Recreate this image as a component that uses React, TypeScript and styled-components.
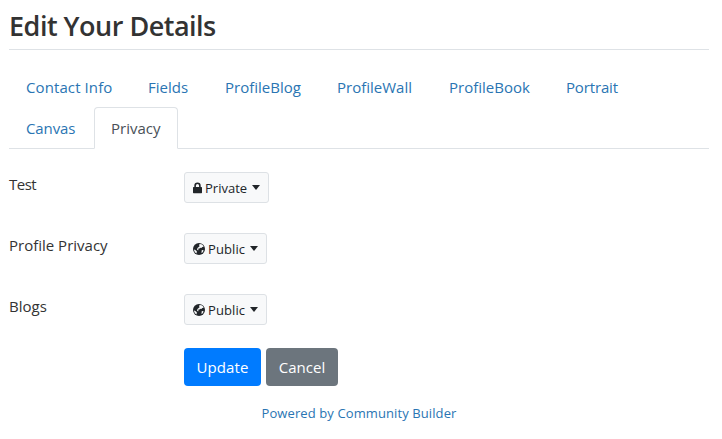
import React from "react";
import styled, { createGlobalStyle } from "styled-components";

const GlobalStyle = createGlobalStyle`
  *, *::before, *::after { box-sizing: border-box; }
  body {
    margin: 0;
    background: #fff;
    color: #333;
    font-family: "Open Sans", "Noto Sans", sans-serif;
    font-size: 15px;
    line-height: 24px;
  }
`;

const Page = styled.main`
  width: 722px;
  height: 439px;
  padding: 9px 13px 0 9px;
  overflow: hidden;
`;

const Title = styled.h1`
  margin: 0 0 16px;
  height: 41px;
  border-bottom: 1px solid #dee2e6;
  font-size: 27px;
  font-weight: 600;
  line-height: 34px;
  letter-spacing: -0.5px;
  color: #333;
`;

const TabList = styled.ul`
  display: flex;
  flex-wrap: wrap;
  margin: 0 0 23px;
  padding: 0;
  list-style: none;
  border-bottom: 1px solid #dee2e6;
`;

const Tab = styled.li<{ $width: number }>`
  width: ${(p) => p.$width}px;
  margin-bottom: -1px;
`;

const TabLink = styled.a<{ $active?: boolean; $spacing: number }>`
  display: block;
  height: 42px;
  padding: 8px 0 8px 16px;
  border: 1px solid transparent;
  border-color: ${(p) => (p.$active ? "#dee2e6 #dee2e6 #fff" : "transparent")};
  border-radius: 4px 4px 0 0;
  background: ${(p) => (p.$active ? "#fff" : "transparent")};
  color: ${(p) => (p.$active ? "#495057" : "#2a75b3")};
  letter-spacing: ${(p) => p.$spacing}px;
  white-space: nowrap;
  text-decoration: none;
`;

const Field = styled.div`
  display: grid;
  grid-template-columns: 175px 1fr;
  align-items: start;
  height: 61px;
`;

const Label = styled.label<{ $spacing: number }>`
  letter-spacing: ${(p) => p.$spacing}px;
`;

const Select = styled.button<{ $width: number }>`
  display: flex;
  align-items: center;
  width: ${(p) => p.$width}px;
  height: 31px;
  padding: 0 8px;
  border: 1px solid #dde1e5;
  border-radius: 3px;
  background: #f8f9fa;
  color: #212529;
  font: 13px/21px "Open Sans", sans-serif;
`;

const SelectText = styled.span<{ $spacing: number }>`
  margin-left: 3px;
  padding-top: 2px;
  letter-spacing: ${(p) => p.$spacing}px;
`;

const Caret = styled.span`
  margin-left: auto;
  border-top: 5px solid #212529;
  border-left: 4px solid transparent;
  border-right: 4px solid transparent;
`;

const Actions = styled.div`
  display: flex;
  gap: 5px;
  margin: -7px 0 0 175px;
`;

const Action = styled.button<{ $tone: string; $width: number; $spacing: number }>`
  width: ${(p) => p.$width}px;
  height: 38px;
  padding: 0;
  border: 0;
  border-radius: 4px;
  background: ${(p) => p.$tone};
  color: #fff;
  font: 15px/24px "Open Sans", sans-serif;
  letter-spacing: ${(p) => p.$spacing}px;
`;

const Footer = styled.footer`
  margin-top: 17px;
  text-align: center;
  font-size: 13px;
  line-height: 21px;
  letter-spacing: 0.1px;
`;

const FooterLink = styled.a`
  color: #2a75b3;
  text-decoration: none;
`;

const LockIcon = () => (
  <svg width="9" height="12" viewBox="0 0 9 12" aria-hidden="true">
    <path
      fill="#212529"
      d="M.6 5.1H1.3V3.7a3.2 3.2 0 0 1 6.4 0v1.4h.7a.6.6 0 0 1 .6.6v4.9a.6.6 0 0 1-.6.6H.6a.6.6 0 0 1-.6-.6V5.7a.6.6 0 0 1 .6-.6ZM2.9 5.1h3.2V3.7a1.6 1.6 0 0 0-3.2 0Z"
    />
  </svg>
);

const GlobeIcon = () => (
  <svg width="12" height="12" viewBox="0 0 12 12" aria-hidden="true">
    <circle cx="6" cy="6" r="6" fill="#212529" />
    <path
      fill="#f8f9fa"
      d="M6 1.4 8 1.1l1.9 1.2.8 1.5-1.4.3-1 .9-.9-.3-1 .8-.9.1-.4 1 .9.5-1.2.2-.8-.7.5-1.5 1.2-1.2.9-.7-.5-.9ZM1 6.4l1.3.6 1.3.9.3.9-.5 1.7-1.2-1-.9-1.4ZM8.7 7.3l1.3-.2.6.7-1.1 1.8-1.1.5.2-1.3Z"
    />
  </svg>
);

const tabs = [
  { name: "Contact Info", width: 122, spacing: 0.1 },
  { name: "Fields", width: 77, spacing: 0 },
  { name: "ProfileBlog", width: 112, spacing: 0 },
  { name: "ProfileWall", width: 112, spacing: 0 },
  { name: "ProfileBook", width: 117, spacing: 0 },
  { name: "Portrait", width: 86, spacing: -0.15 },
  { name: "Canvas", width: 85, spacing: -0.1 },
  { name: "Privacy", width: 84, spacing: 0, active: true },
];

const fields = [
  { name: "Test", spacing: -0.5, value: "Private", width: 85, textSpacing: 0 },
  { name: "Profile Privacy", spacing: 0, value: "Public", width: 83, textSpacing: 0.1 },
  { name: "Blogs", spacing: 0, value: "Public", width: 83, textSpacing: 0.1 },
];

export default function App() {
  return (
    <Page>
      <GlobalStyle />
      <Title>Edit Your Details</Title>
      <TabList>
        {tabs.map((t) => (
          <Tab key={t.name} $width={t.width}>
            <TabLink $active={t.active} $spacing={t.spacing}>{t.name}</TabLink>
          </Tab>
        ))}
      </TabList>
      {fields.map((f) => (
        <Field key={f.name}>
          <Label $spacing={f.spacing}>{f.name}</Label>
          <Select type="button" $width={f.width}>
            {f.value === "Private" ? <LockIcon /> : <GlobeIcon />}
            <SelectText $spacing={f.textSpacing}>{f.value}</SelectText>
            <Caret />
          </Select>
        </Field>
      ))}
      <Actions>
        <Action type="button" $tone="#007bff" $width={77} $spacing={0.1}>Update</Action>
        <Action type="button" $tone="#6c757d" $width={72} $spacing={0}>Cancel</Action>
      </Actions>
      <Footer>
        <FooterLink>Powered by Community Builder</FooterLink>
      </Footer>
    </Page>
  );
}
